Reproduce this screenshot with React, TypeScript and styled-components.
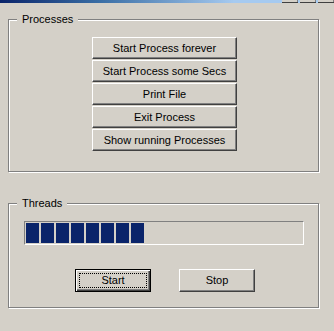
import React from "react";
import styled, { createGlobalStyle } from "styled-components";

const GlobalStyle = createGlobalStyle`
  html, body {
    margin: 0;
    padding: 0;
    background: #d4d0c8;
  }
  body {
    font-family: "Liberation Sans", Arial, sans-serif;
    font-size: 11px;
    color: #000;
  }
`;

const Window = styled.div`
  width: 334px;
  height: 331px;
  background: #d4d0c8;
  display: flex;
  flex-direction: column;
  overflow: hidden;
`;

const TitleStrip = styled.div`
  flex: none;
  height: 3px;
  display: flex;
  justify-content: flex-end;
  gap: 2px;
  background: linear-gradient(to right, #0a246a 0%, #3a6ea5 30%, #a6caf0 70%);
`;

const CaptionButton = styled.div`
  width: 16px;
  height: 2px;
  background: #d4d0c8;
  border-bottom: 1px solid #404040;
  box-shadow: inset -1px 0 #808080;
`;

const Content = styled.div`
  padding-left: 8px;
  display: flex;
  flex-direction: column;
`;

const GroupBox = styled.div<{ $top: number; $height: number }>`
  position: relative;
  box-sizing: border-box;
  width: 311px;
  height: ${(p) => p.$height}px;
  margin-top: ${(p) => p.$top}px;
  border: 1px solid #808080;
  box-shadow: 1px 1px 0 #fff, inset 1px 1px 0 #fff;
  display: flex;
  flex-direction: column;
`;

const Caption = styled.span`
  position: absolute;
  top: -7px;
  left: 8px;
  padding: 0 5px;
  line-height: 13px;
  background: #d4d0c8;
`;

const ButtonStack = styled.div`
  display: flex;
  flex-direction: column;
  align-items: center;
  gap: 1px;
  padding: 17px 0 0 2px;
`;

const Button = styled.button<{ $width: number; $height: number; $default?: boolean }>`
  position: relative;
  box-sizing: border-box;
  width: ${(p) => p.$width}px;
  height: ${(p) => p.$height}px;
  padding: 0;
  font-family: "Liberation Sans", Arial, sans-serif;
  font-size: 11px;
  line-height: 13px;
  color: #000;
  background: #d4d0c8;
  border: 1px solid;
  border-color: ${(p) => (p.$default ? "#000" : "#fff #404040 #404040 #fff")};
  box-shadow: ${(p) =>
    p.$default
      ? "inset 1px 1px #fff, inset -1px -1px #404040, inset -2px -2px #808080"
      : "inset -1px -1px #808080, inset 1px 1px #d4d0c8"};
  cursor: default;
  outline: none;

  ${(p) =>
    p.$default &&
    `
    &::after {
      content: "";
      position: absolute;
      inset: 3px;
      border: 1px dotted #000;
    }
  `}
`;

const ProgressFrame = styled.div`
  box-sizing: border-box;
  width: 280px;
  height: 24px;
  margin: 17px 0 0 15px;
  padding: 1px 1px;
  border: 1px solid;
  border-color: #808080 #fff #fff #808080;
  display: flex;
  gap: 2px;
`;

const Block = styled.div`
  width: 13px;
  height: 100%;
  background: #0a246a;
`;

const ButtonRow = styled.div`
  display: flex;
  gap: 28px;
  margin-top: 24px;
  padding-left: 66px;
`;

const processButtons = [
  "Start Process forever",
  "Start Process some Secs",
  "Print File",
  "Exit Process",
  "Show running Processes",
];

export default function App() {
  const progress = 8;
  return (
    <Window>
      <GlobalStyle />
      <TitleStrip>
        <CaptionButton />
        <CaptionButton />
        <CaptionButton />
      </TitleStrip>
      <Content>
        <GroupBox $top={16} $height={153}>
          <Caption>Processes</Caption>
          <ButtonStack>
            {processButtons.map((label) => (
              <Button key={label} $width={145} $height={22}>
                {label}
              </Button>
            ))}
          </ButtonStack>
        </GroupBox>
        <GroupBox $top={31} $height={105}>
          <Caption>Threads</Caption>
          <ProgressFrame>
            {Array.from({ length: progress }).map((_, i) => (
              <Block key={i} />
            ))}
          </ProgressFrame>
          <ButtonRow>
            <Button $width={76} $height={23} $default>
              Start
            </Button>
            <Button $width={76} $height={23}>
              Stop
            </Button>
          </ButtonRow>
        </GroupBox>
      </Content>
    </Window>
  );
}
